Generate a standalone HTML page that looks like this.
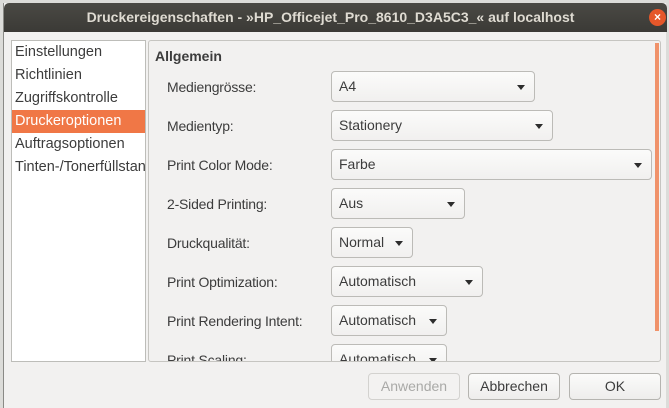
<!DOCTYPE html>
<html><head><meta charset="utf-8"><style>
*{box-sizing:border-box;margin:0;padding:0}
body{width:669px;height:408px;background:#dcdcd9;font-family:"Liberation Sans","DejaVu Sans",sans-serif;font-size:13.5px;color:#3c3c3c;position:relative;overflow:hidden}
.win{position:absolute;left:3px;top:3px;width:663px;height:405px;background:#f2f1f0;border-left:1px solid #8a8a86}
.title{position:absolute;left:0;top:0;width:663px;height:29px;background:linear-gradient(#4a4944,#3b3a36);border-radius:5px 5px 0 0;color:#dfdbd2;font-weight:bold;font-size:14px;text-align:center;line-height:29px;padding-right:10px}
.close{position:absolute;left:645px;top:6px;width:17px;height:17px;border-radius:50%;background:#e5572a;color:#fff;font-size:12px;line-height:17px;text-align:center;font-weight:bold}
.list{position:absolute;left:11px;top:40px;width:135px;height:322px;background:#fff;border:1px solid #bdbdb9;overflow:hidden}
.list div{height:23px;line-height:22px;padding-left:3px;white-space:nowrap;font-size:14.5px;color:#3c3c3c}
.list .sel{background:#f07746;color:#fff}
.panel{position:absolute;left:148px;top:40px;width:513px;height:322px;border:1px solid #c6c5c1;border-radius:3px;overflow:hidden}
.scroll{position:absolute;left:506px;top:2px;width:4px;height:288px;background:#f0926a}
.hdr{position:absolute;left:6px;top:7px;font-weight:bold;font-size:14px}
.lbl{position:absolute;left:18px;font-size:14px;letter-spacing:-0.2px}
.cb{position:absolute;left:182px;height:31px;border:1px solid #bcbbb7;border-radius:4px;background:linear-gradient(#fbfbfa,#f1f0ef);padding-left:7px;line-height:29px;font-size:14px}
.cb:after{content:"";position:absolute;right:9px;top:13px;border-left:4.5px solid transparent;border-right:4.5px solid transparent;border-top:5px solid #2d2d2d}
.btn{position:absolute;top:373px;height:27px;border:1px solid #b5b4b0;border-radius:4px;background:linear-gradient(#fbfbfa,#eeedec);text-align:center;line-height:25px;font-size:14px}
</style></head><body>
<div class="win">
<div class="title">Druckereigenschaften - »HP_Officejet_Pro_8610_D3A5C3_« auf localhost<div class="close">×</div></div>
</div>
<div class="list">
<div>Einstellungen</div><div>Richtlinien</div><div>Zugriffskontrolle</div><div class="sel">Druckeroptionen</div><div>Auftragsoptionen</div><div>Tinten-/Tonerfüllstand</div>
</div>
<div class="panel">
<div class="scroll"></div>
<div class="hdr">Allgemein</div>
<div class="lbl" style="top:38px">Mediengrösse:</div><div class="cb" style="top:30px;width:204px">A4</div>
<div class="lbl" style="top:77px">Medientyp:</div><div class="cb" style="top:69px;width:222px">Stationery</div>
<div class="lbl" style="top:116px">Print Color Mode:</div><div class="cb" style="top:108px;width:321px">Farbe</div>
<div class="lbl" style="top:155px">2-Sided Printing:</div><div class="cb" style="top:147px;width:134px">Aus</div>
<div class="lbl" style="top:194px">Druckqualität:</div><div class="cb" style="top:186px;width:82px">Normal</div>
<div class="lbl" style="top:233px">Print Optimization:</div><div class="cb" style="top:225px;width:152px">Automatisch</div>
<div class="lbl" style="top:272px">Print Rendering Intent:</div><div class="cb" style="top:264px;width:116px">Automatisch</div>
<div class="lbl" style="top:311px">Print Scaling:</div><div class="cb" style="top:303px;width:116px">Automatisch</div>
</div>
<div class="btn" style="left:368px;width:92px;color:#a9a9a7;border-color:#d3d2cf;background:#f3f2f1">Anwenden</div>
<div class="btn" style="left:468px;width:92px">Abbrechen</div>
<div class="btn" style="left:569px;width:92px">OK</div>
</body></html>
